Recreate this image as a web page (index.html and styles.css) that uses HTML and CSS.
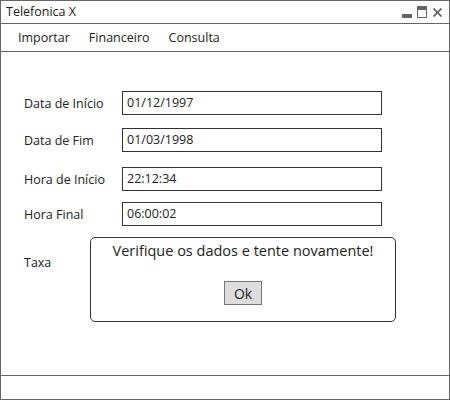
FILE: index.html
```html
<!DOCTYPE html>
<html>
<head>
<meta charset="utf-8">
<link rel="stylesheet" href="styles.css">
</head>
<body>
<div class="window">
  <div class="titlebar">
    <span class="title">Telefonica X</span>
    <div class="controls">
      <span class="ctl-min"></span>
      <span class="ctl-max"></span>
      <svg class="ctl-close" width="9" height="9" viewBox="0 0 9 9"><path d="M0.5 0.5 L8.5 8.5 M8.5 0.5 L0.5 8.5" stroke="#666" stroke-width="1.8"/></svg>
    </div>
  </div>
  <div class="menubar">
    <span class="menu-item">Importar</span>
    <span class="menu-item">Financeiro</span>
    <span class="menu-item">Consulta</span>
  </div>
  <div class="content">
    <div class="form">
      <div class="row r1"><span class="label">Data de Início</span><div class="field">01/12/1997</div></div>
      <div class="row r2"><span class="label">Data de Fim</span><div class="field">01/03/1998</div></div>
      <div class="row r3"><span class="label">Hora de Início</span><div class="field">22:12:34</div></div>
      <div class="row r4"><span class="label">Hora Final</span><div class="field">06:00:02</div></div>
      <div class="row r5"><span class="label">Taxa</span></div>
    </div>
    <div class="dialog">
      <div class="dialog-msg">Verifique os dados e tente novamente!</div>
      <button class="ok">Ok</button>
    </div>
  </div>
  <div class="statusbar"></div>
</div>
</body>
</html>
```
FILE: styles.css
```css
html, body {
  margin: 0;
  padding: 0;
  background: #fff;
}
body {
  font-family: "Open Sans", "Liberation Sans", sans-serif;
  color: #222;
  font-size: 12.5px;
}
.window {
  width: 450px;
  height: 400px;
  box-sizing: border-box;
  border: 1px solid #666;
  display: flex;
  flex-direction: column;
}
.titlebar {
  height: 22px;
  border-bottom: 1px solid #666;
  display: flex;
  align-items: center;
  justify-content: space-between;
  padding: 0 7px 0 5px;
}
.title {
  font-size: 12.5px;
  line-height: 22px;
}
.controls {
  display: flex;
  align-items: flex-end;
  gap: 5px;
  height: 11px;
}
.ctl-min {
  width: 10px;
  height: 4px;
  background: #666;
}
.ctl-max {
  width: 8px;
  height: 7px;
  border: 1px solid #666;
  border-top-width: 4px;
}
.ctl-close {
  margin-left: 1px;
  align-self: center;
}
.menubar {
  height: 27px;
  border-bottom: 1px solid #666;
  display: flex;
  align-items: center;
  gap: 19px;
  padding-left: 17px;
}
.menu-item {
  font-size: 12.5px;
}
.content {
  flex: 1;
  position: relative;
}
.form {
  display: flex;
  flex-direction: column;
  padding: 39px 0 0 23px;
}
.row {
  display: flex;
  align-items: center;
  height: 24px;
}
.r2 { margin-top: 13px; }
.r3 { margin-top: 15px; }
.r4 { margin-top: 11px; }
.r5 { margin-top: 24px; }
.label {
  width: 98px;
}
.field {
  width: 260px;
  height: 24px;
  box-sizing: border-box;
  border: 1px solid #333;
  padding: 0 4px;
  line-height: 22px;
}
.dialog {
  position: absolute;
  left: 89px;
  top: 185px;
  width: 306px;
  height: 85px;
  box-sizing: border-box;
  border: 1px solid #333;
  border-radius: 5px;
  background: #fff;
  display: flex;
  flex-direction: column;
  align-items: center;
}
.dialog-msg {
  font-size: 14.5px;
  margin-top: 3px;
  line-height: 20px;
}
.ok {
  margin-top: 20px;
  width: 38px;
  height: 24px;
  background: #ddd;
  border: 1px solid #777;
  font-family: inherit;
  font-size: 14px;
  color: #222;
  padding: 0;
}
.statusbar {
  height: 23px;
  border-top: 1px solid #666;
}
```
